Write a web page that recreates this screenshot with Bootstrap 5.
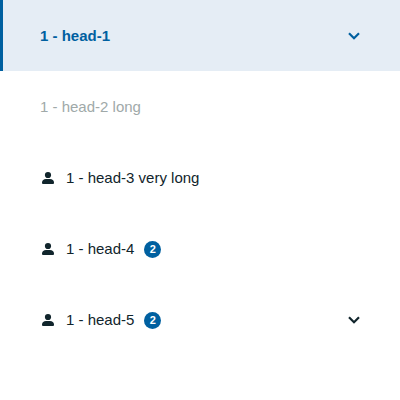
<!DOCTYPE html>
<html lang="en">
<head>
<meta charset="utf-8">
<meta name="viewport" content="width=device-width, initial-scale=1">
<title>Tabs</title>
<link href="https://cdn.jsdelivr.net/npm/bootstrap@5.3.0/dist/css/bootstrap.min.css" rel="stylesheet">
<style>
body{font-family:"Liberation Sans",Arial,sans-serif;font-size:15px;line-height:24px;color:#11252c}
.side-tab{height:71px;padding:0 40px 0 37px;border:0;border-left:3px solid transparent;color:#11252c;background:#fff}
.side-tab.current{background:#e5edf5;border-left-color:#0060a0;color:#0060a0;font-weight:700}
.side-tab.off{color:#a0a9a9}
.tab-icon{width:16px;height:16px;margin-right:10px}
.tab-count{width:17px;height:17px;margin:1px 0 0 10px;font-size:11px;line-height:17px;padding:0;background:#0060a0}
.tab-arrow{width:12px;height:8px}
</style>
</head>
<body>
<svg class="d-none"><defs>
<symbol id="person" viewBox="0 0 16 16"><circle cx="8" cy="5" r="3.100"/><path d="M2 13v-.5C2 10.300 3.800 9 6 9h4c2.200 0 4 1.300 4 3.500v.5q0 1-1 1H3q-1 0-1-1z"/></symbol>
<symbol id="chevron" viewBox="0 0 12 8"><path d="M1 1.300 6 6.300 11 1.300" fill="none" stroke="currentColor" stroke-width="2.200"/></symbol>
</defs></svg>
<nav class="nav flex-column">
<a class="side-tab current d-flex align-items-center text-decoration-none"><span>1 - head-1</span><svg class="tab-arrow ms-auto"><use href="#chevron"/></svg></a>
<a class="side-tab off d-flex align-items-center text-decoration-none"><span>1 - head-2 long</span></a>
<a class="side-tab d-flex align-items-center text-decoration-none"><svg class="tab-icon" fill="currentColor"><use href="#person"/></svg><span>1 - head-3 very long</span></a>
<a class="side-tab d-flex align-items-center text-decoration-none"><svg class="tab-icon" fill="currentColor"><use href="#person"/></svg><span>1 - head-4</span><span class="badge rounded-circle tab-count">2</span></a>
<a class="side-tab d-flex align-items-center text-decoration-none"><svg class="tab-icon" fill="currentColor"><use href="#person"/></svg><span>1 - head-5</span><span class="badge rounded-circle tab-count">2</span><svg class="tab-arrow ms-auto"><use href="#chevron"/></svg></a>
</nav>
<script src="https://cdn.jsdelivr.net/npm/bootstrap@5.3.0/dist/js/bootstrap.bundle.min.js"></script>
</body>
</html>
